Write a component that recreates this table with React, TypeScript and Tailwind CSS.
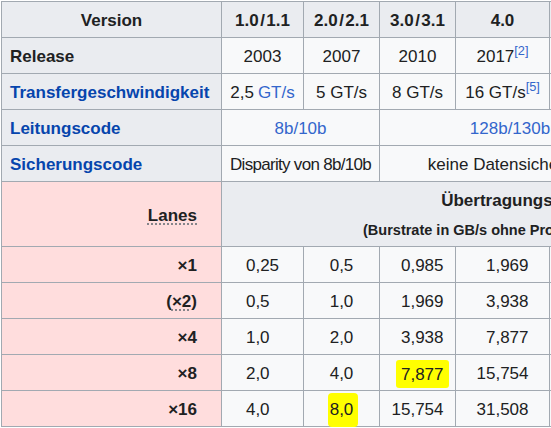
import React from 'react'

const font = { fontFamily: '"Liberation Sans", Arial, sans-serif' }

type CellProps = { className?: string; children?: React.ReactNode }

// header cell (grey, bold, centered)
function Th({ className = '', children }: CellProps) {
  return (
    <div className={`flex items-center justify-center bg-[#eaecf0] pt-[3px] font-bold whitespace-nowrap ${className}`}>
      {children}
    </div>
  )
}

// row header on the left (grey, bold, left)
function RowTh({ children }: CellProps) {
  return (
    <div className="flex items-center bg-[#eaecf0] pl-[8px] pt-[3px] font-bold whitespace-nowrap text-[#0645ad]">
      {children}
    </div>
  )
}

function Td({ className = '', children }: CellProps) {
  return (
    <div className={`flex items-center justify-center bg-[#f8f9fa] pt-[3px] whitespace-nowrap ${className}`}>
      {children}
    </div>
  )
}

function LaneTh({ children }: CellProps) {
  return (
    <div className="flex items-center justify-end bg-[#ffdddd] pr-[24px] pt-[3px] font-bold whitespace-nowrap">
      {children}
    </div>
  )
}

function Ref({ n }: { n: number }) {
  return <sup className="text-[#3366cc]">[{n}]</sup>
}

function Slash() {
  return <span className="mx-[1.5px]">/</span>
}

function Pad() {
  return <span className="invisible">0</span>
}

function Mark({ className = '', children }: CellProps) {
  return <span className={`bg-[#ffff00] ${className}`}>{children}</span>
}

const abbr = 'underline decoration-dotted decoration-[#72777d] underline-offset-[2px]'

const lanes: { label: React.ReactNode; values: React.ReactNode[] }[] = [
  {
    label: '×1',
    values: ['0,25', '0,5', <><Pad />0,985</>, <><Pad />1,969</>, <><Pad />3,938</>, <><Pad />7,563</>, '15,125'],
  },
  {
    label: (
      <>
        (<span className={abbr}>×2</span>)
      </>
    ),
    values: [<>0,5<Pad /></>, '1,0', <><Pad />1,969</>, <><Pad />3,938</>, <><Pad />7,877</>, '15,125', '30,250'],
  },
  {
    label: '×4',
    values: [<>1,0<Pad /></>, '2,0', <><Pad />3,938</>, <><Pad />7,877</>, '15,754', '30,250', '60,500'],
  },
  {
    label: '×8',
    values: [
      <>2,0<Pad /></>,
      '4,0',
      <><Pad /><Mark className="-mx-[5px] rounded-[3px] px-[5px] pt-[2px] pb-[1px]">7,877</Mark></>,
      '15,754',
      '31,508',
      '60,500',
      '121,000',
    ],
  },
  {
    label: '×16',
    values: [
      <>4,0<Pad /></>,
      <Mark className="-ml-[2px] -mr-[5px] rounded-[4px] pl-[2px] pr-[5px] pt-[4px] pb-[5px]">8,0</Mark>,
      '15,754',
      '31,508',
      '63,015',
      '121,000',
      '242,000',
    ],
  },
]

export default function App() {
  return (
    <div className="h-[428px] w-[551px] overflow-hidden bg-white text-[17px] text-[#202122]" style={font}>
      <div className="ml-px mt-px grid w-max grid-cols-[219px_81px_75px_75px_93px_90px_80px_81px] grid-rows-[repeat(5,35px)_64px_repeat(5,35px)] gap-px bg-[#a2a9b1] p-px">
        {/* version row */}
        <Th>Version</Th>
        <Th>1.0<Slash />1.1</Th>
        <Th>2.0<Slash />2.1</Th>
        <Th>3.0<Slash />3.1</Th>
        <Th>4.0</Th>
        <Th>5.0</Th>
        <Th>6.0</Th>
        <Th>7.0</Th>

        {/* release */}
        <div className="flex items-center bg-[#eaecf0] pl-[8px] pt-[3px] font-bold">Release</div>
        <Td>2003</Td>
        <Td>2007</Td>
        <Td>2010</Td>
        <Td>2017<Ref n={2} /></Td>
        <Td>2019<Ref n={3} /></Td>
        <Td>2022</Td>
        <Td>2025</Td>

        {/* transfer rate */}
        <RowTh>Transfergeschwindigkeit</RowTh>
        <Td>2,5 <span className="ml-[4px] text-[#3366cc]">GT/s</span></Td>
        <Td>5 GT/s</Td>
        <Td>8 GT/s</Td>
        <Td>16 GT/s<Ref n={5} /></Td>
        <Td>32 GT/s</Td>
        <Td>64 GT/s</Td>
        <Td>128 GT/s</Td>

        {/* line code */}
        <RowTh>Leitungscode</RowTh>
        <Td className="col-span-2 text-[#3366cc]">8b/10b</Td>
        <Td className="col-span-3 text-[#3366cc]">128b/130b</Td>
        <Td className="col-span-2">PAM4, FLIT</Td>

        {/* error protection */}
        <RowTh>Sicherungscode</RowTh>
        <Td className="col-span-2 tracking-[-0.7px]">Disparity von 8b/10b</Td>
        <Td className="col-span-3">keine Datensicherung</Td>
        <Td className="col-span-2">FEC, CRC</Td>

        {/* lanes header */}
        <div className="flex items-center justify-end bg-[#ffdddd] pr-[24px] pt-[4px] font-bold">
          <span className={abbr}>Lanes</span>
        </div>
        <div className="col-span-7 flex flex-col bg-[#eaecf0] pt-[3px] font-bold">
          <div className="flex h-[32px] items-center justify-center">Übertragungsrate</div>
          <div className="flex h-[28px] items-center justify-center text-[14.5px]">
            (Burstrate in GB/s ohne Protokolloverhead)
          </div>
        </div>

        {lanes.map((row, i) => (
          <React.Fragment key={i}>
            <LaneTh>{row.label}</LaneTh>
            {row.values.map((v, j) => (
              <Td key={j}>{v}</Td>
            ))}
          </React.Fragment>
        ))}
      </div>
    </div>
  )
}
